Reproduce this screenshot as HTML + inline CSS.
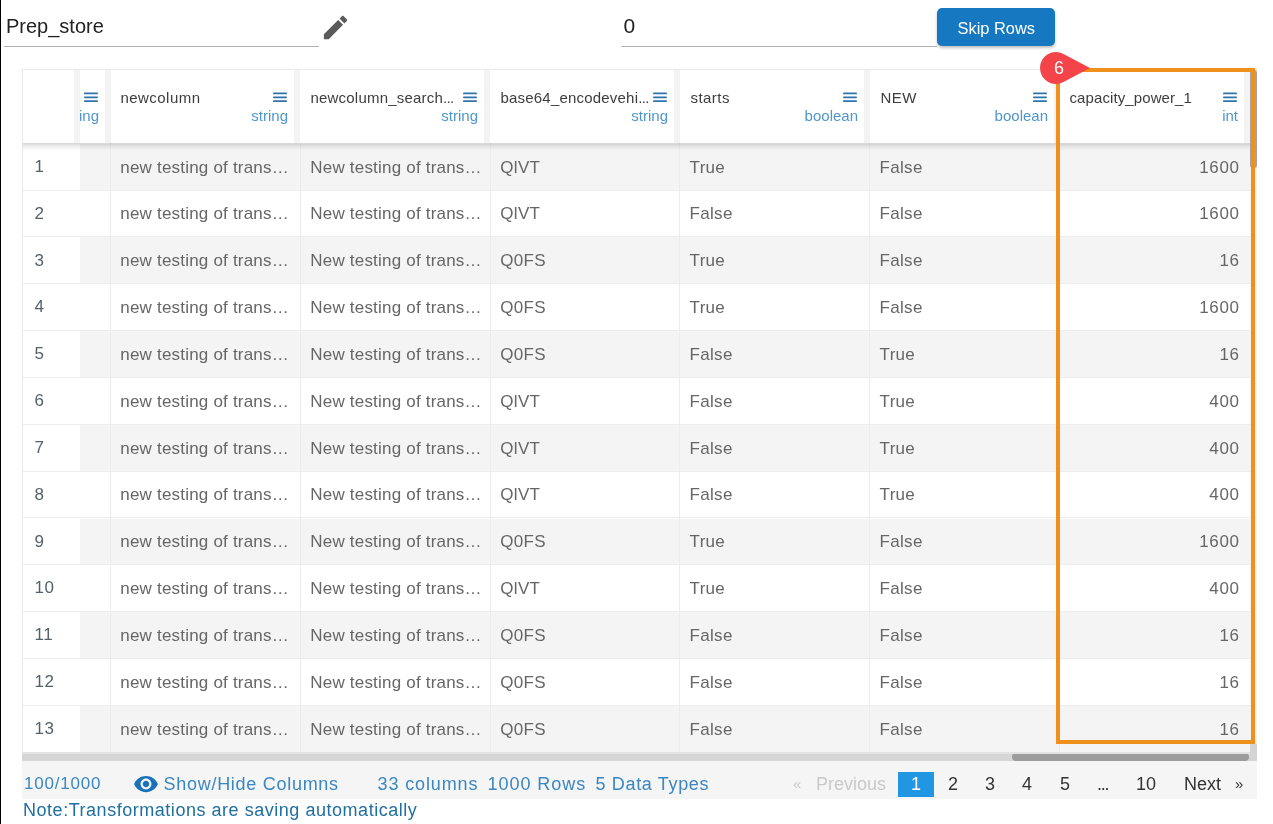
<!DOCTYPE html><html><head><meta charset="utf-8"><style>
*{box-sizing:border-box;margin:0;padding:0}
html,body{width:1273px;height:824px;overflow:hidden;background:#fff;font-family:"Liberation Sans",sans-serif}
.a{position:absolute}
.t{position:absolute;white-space:nowrap;line-height:1}
.hb{position:absolute;width:14px;height:10px}
.hb i{position:absolute;left:0;width:14px;height:2px;background:#2f75b3;border-radius:1px}
</style></head><body><div id="root" style="position:absolute;left:0;top:0;width:1273px;height:824px;will-change:transform"><div class="a" style="left:0;top:0;width:1px;height:824px;background:#000"></div>
<div class="t" style="left:6px;top:15.5px;font-size:20px;color:#222">Prep_store</div>
<div class="a" style="left:4px;top:46px;width:315px;height:1px;background:#b0b0b0"></div>
<svg class="a" style="left:320px;top:12px" width="31" height="31" viewBox="0 0 24 24"><path fill="#5a5a5a" d="M3 17.25V21h3.75L17.81 9.94l-3.75-3.75L3 17.25zM20.71 7.04c.39-.39.39-1.02 0-1.41l-2.34-2.34c-.39-.39-1.02-.39-1.410 0l-1.83 1.83 3.75 3.75 1.83-1.83z"/></svg>
<div class="t" style="left:623.5px;top:14.5px;font-size:21px;color:#222">0</div>
<div class="a" style="left:621px;top:46px;width:316px;height:1px;background:#b0b0b0"></div>
<div class="a" style="left:937px;top:8px;width:118px;height:38px;background:#1778c2;border-radius:5px;box-shadow:0 2px 3px rgba(0,0,0,.25)"></div>
<div class="t" style="left:957.5px;top:19.5px;font-size:16.4px;color:#fff">Skip Rows</div>
<div class="a" style="left:22px;top:69px;width:1235px;height:692px;border:1px solid #e8e8e8;border-bottom:none"></div>
<div class="a" style="left:23px;top:70px;width:1227px;height:73px;background:#fff"></div>
<div class="a" style="left:74px;top:70px;width:6px;height:73px;background:#f3f3f3"></div>
<div class="a" style="left:105px;top:70px;width:6px;height:73px;background:#f3f3f3"></div>
<div class="a" style="left:294px;top:70px;width:6px;height:73px;background:#f3f3f3"></div>
<div class="a" style="left:484px;top:70px;width:6px;height:73px;background:#f3f3f3"></div>
<div class="a" style="left:674px;top:70px;width:6px;height:73px;background:#f3f3f3"></div>
<div class="a" style="left:864px;top:70px;width:6px;height:73px;background:#f3f3f3"></div>
<div class="a" style="left:1054px;top:70px;width:6px;height:73px;background:#f3f3f3"></div>
<div class="a" style="left:1244px;top:70px;width:6px;height:73px;background:#f3f3f3"></div>
<svg class="a" style="left:83.5px;top:91px" width="14" height="12"><g fill="#2f73ad"><rect x="0" y="1.5" width="14" height="1.8" rx=".9"/><rect x="0" y="5.4" width="14" height="1.8" rx=".9"/><rect x="0" y="9.3" width="14" height="1.8" rx=".9"/></g></svg>
<div class="t" style="right:1174px;top:108px;font-size:15px;color:#5096cc">ing</div>
<div class="t" style="left:120.5px;top:90px;font-size:15px;color:#3d3d3d;letter-spacing:0.45px">newcolumn</div>
<svg class="a" style="left:273px;top:91px" width="14" height="12"><g fill="#2f73ad"><rect x="0" y="1.5" width="14" height="1.8" rx=".9"/><rect x="0" y="5.4" width="14" height="1.8" rx=".9"/><rect x="0" y="9.3" width="14" height="1.8" rx=".9"/></g></svg>
<div class="t" style="right:985px;top:108px;font-size:15px;color:#5096cc">string</div>
<div class="t" style="left:310.5px;top:90px;font-size:15px;color:#3d3d3d;letter-spacing:0.2px">newcolumn_search<span style="letter-spacing:-0.6px">...</span></div>
<svg class="a" style="left:463px;top:91px" width="14" height="12"><g fill="#2f73ad"><rect x="0" y="1.5" width="14" height="1.8" rx=".9"/><rect x="0" y="5.4" width="14" height="1.8" rx=".9"/><rect x="0" y="9.3" width="14" height="1.8" rx=".9"/></g></svg>
<div class="t" style="right:795px;top:108px;font-size:15px;color:#5096cc">string</div>
<div class="t" style="left:500.5px;top:90px;font-size:15px;color:#3d3d3d;letter-spacing:0.2px">base64_encodevehi<span style="letter-spacing:-0.6px">...</span></div>
<svg class="a" style="left:653px;top:91px" width="14" height="12"><g fill="#2f73ad"><rect x="0" y="1.5" width="14" height="1.8" rx=".9"/><rect x="0" y="5.4" width="14" height="1.8" rx=".9"/><rect x="0" y="9.3" width="14" height="1.8" rx=".9"/></g></svg>
<div class="t" style="right:605px;top:108px;font-size:15px;color:#5096cc">string</div>
<div class="t" style="left:690.5px;top:90px;font-size:15px;color:#3d3d3d;letter-spacing:0.45px">starts</div>
<svg class="a" style="left:843px;top:91px" width="14" height="12"><g fill="#2f73ad"><rect x="0" y="1.5" width="14" height="1.8" rx=".9"/><rect x="0" y="5.4" width="14" height="1.8" rx=".9"/><rect x="0" y="9.3" width="14" height="1.8" rx=".9"/></g></svg>
<div class="t" style="right:415px;top:108px;font-size:15px;color:#5096cc">boolean</div>
<div class="t" style="left:880.5px;top:90px;font-size:15px;color:#3d3d3d;letter-spacing:0.45px">NEW</div>
<svg class="a" style="left:1033px;top:91px" width="14" height="12"><g fill="#2f73ad"><rect x="0" y="1.5" width="14" height="1.8" rx=".9"/><rect x="0" y="5.4" width="14" height="1.8" rx=".9"/><rect x="0" y="9.3" width="14" height="1.8" rx=".9"/></g></svg>
<div class="t" style="right:225px;top:108px;font-size:15px;color:#5096cc">boolean</div>
<div class="t" style="left:1069.5px;top:90px;font-size:15px;color:#3d3d3d;letter-spacing:0.1px">capacity_power_1</div>
<svg class="a" style="left:1223px;top:91px" width="14" height="12"><g fill="#2f73ad"><rect x="0" y="1.5" width="14" height="1.8" rx=".9"/><rect x="0" y="5.4" width="14" height="1.8" rx=".9"/><rect x="0" y="9.3" width="14" height="1.8" rx=".9"/></g></svg>
<div class="t" style="right:35px;top:108px;font-size:15px;color:#5096cc">int</div>
<div class="a" style="left:23px;top:143.70px;width:57px;height:46.85px;background:#fff;border-bottom:1px solid #ededed"></div>
<div class="a" style="left:80px;top:143.70px;width:1170px;height:46.85px;background:#f4f4f4;border-bottom:1px solid #ededed"></div>
<div class="t" style="left:34.5px;top:157.80px;font-size:17px;color:#56606a;letter-spacing:0.5px">1</div>
<div class="t" style="left:120.3px;top:158.50px;font-size:17px;color:#666;letter-spacing:0.2px">new testing of trans…</div>
<div class="t" style="left:310.3px;top:158.50px;font-size:17px;color:#666;letter-spacing:0.2px">New testing of trans…</div>
<div class="t" style="left:500.3px;top:158.50px;font-size:17px;color:#666;letter-spacing:0.3px">QlVT</div>
<div class="t" style="left:689.5999999999999px;top:158.50px;font-size:17px;color:#666;letter-spacing:0.3px">True</div>
<div class="t" style="left:879.5999999999999px;top:158.50px;font-size:17px;color:#666;letter-spacing:0.3px">False</div>
<div class="t" style="right:33.5px;top:158.50px;font-size:17px;color:#666;letter-spacing:0.6px">1600</div>
<div class="a" style="left:23px;top:190.55px;width:57px;height:46.85px;background:#fff;border-bottom:1px solid #ededed"></div>
<div class="a" style="left:80px;top:190.55px;width:1170px;height:46.85px;background:#fff;border-bottom:1px solid #ededed"></div>
<div class="t" style="left:34.5px;top:204.65px;font-size:17px;color:#56606a;letter-spacing:0.5px">2</div>
<div class="t" style="left:120.3px;top:205.35px;font-size:17px;color:#666;letter-spacing:0.2px">new testing of trans…</div>
<div class="t" style="left:310.3px;top:205.35px;font-size:17px;color:#666;letter-spacing:0.2px">New testing of trans…</div>
<div class="t" style="left:500.3px;top:205.35px;font-size:17px;color:#666;letter-spacing:0.3px">QlVT</div>
<div class="t" style="left:689.5999999999999px;top:205.35px;font-size:17px;color:#666;letter-spacing:0.3px">False</div>
<div class="t" style="left:879.5999999999999px;top:205.35px;font-size:17px;color:#666;letter-spacing:0.3px">False</div>
<div class="t" style="right:33.5px;top:205.35px;font-size:17px;color:#666;letter-spacing:0.6px">1600</div>
<div class="a" style="left:23px;top:237.40px;width:57px;height:46.85px;background:#fff;border-bottom:1px solid #ededed"></div>
<div class="a" style="left:80px;top:237.40px;width:1170px;height:46.85px;background:#f4f4f4;border-bottom:1px solid #ededed"></div>
<div class="t" style="left:34.5px;top:251.50px;font-size:17px;color:#56606a;letter-spacing:0.5px">3</div>
<div class="t" style="left:120.3px;top:252.20px;font-size:17px;color:#666;letter-spacing:0.2px">new testing of trans…</div>
<div class="t" style="left:310.3px;top:252.20px;font-size:17px;color:#666;letter-spacing:0.2px">New testing of trans…</div>
<div class="t" style="left:500.3px;top:252.20px;font-size:17px;color:#666;letter-spacing:0.3px">Q0FS</div>
<div class="t" style="left:689.5999999999999px;top:252.20px;font-size:17px;color:#666;letter-spacing:0.3px">True</div>
<div class="t" style="left:879.5999999999999px;top:252.20px;font-size:17px;color:#666;letter-spacing:0.3px">False</div>
<div class="t" style="right:33.5px;top:252.20px;font-size:17px;color:#666;letter-spacing:0.6px">16</div>
<div class="a" style="left:23px;top:284.25px;width:57px;height:46.85px;background:#fff;border-bottom:1px solid #ededed"></div>
<div class="a" style="left:80px;top:284.25px;width:1170px;height:46.85px;background:#fff;border-bottom:1px solid #ededed"></div>
<div class="t" style="left:34.5px;top:298.35px;font-size:17px;color:#56606a;letter-spacing:0.5px">4</div>
<div class="t" style="left:120.3px;top:299.05px;font-size:17px;color:#666;letter-spacing:0.2px">new testing of trans…</div>
<div class="t" style="left:310.3px;top:299.05px;font-size:17px;color:#666;letter-spacing:0.2px">New testing of trans…</div>
<div class="t" style="left:500.3px;top:299.05px;font-size:17px;color:#666;letter-spacing:0.3px">Q0FS</div>
<div class="t" style="left:689.5999999999999px;top:299.05px;font-size:17px;color:#666;letter-spacing:0.3px">True</div>
<div class="t" style="left:879.5999999999999px;top:299.05px;font-size:17px;color:#666;letter-spacing:0.3px">False</div>
<div class="t" style="right:33.5px;top:299.05px;font-size:17px;color:#666;letter-spacing:0.6px">1600</div>
<div class="a" style="left:23px;top:331.10px;width:57px;height:46.85px;background:#fff;border-bottom:1px solid #ededed"></div>
<div class="a" style="left:80px;top:331.10px;width:1170px;height:46.85px;background:#f4f4f4;border-bottom:1px solid #ededed"></div>
<div class="t" style="left:34.5px;top:345.20px;font-size:17px;color:#56606a;letter-spacing:0.5px">5</div>
<div class="t" style="left:120.3px;top:345.90px;font-size:17px;color:#666;letter-spacing:0.2px">new testing of trans…</div>
<div class="t" style="left:310.3px;top:345.90px;font-size:17px;color:#666;letter-spacing:0.2px">New testing of trans…</div>
<div class="t" style="left:500.3px;top:345.90px;font-size:17px;color:#666;letter-spacing:0.3px">Q0FS</div>
<div class="t" style="left:689.5999999999999px;top:345.90px;font-size:17px;color:#666;letter-spacing:0.3px">False</div>
<div class="t" style="left:879.5999999999999px;top:345.90px;font-size:17px;color:#666;letter-spacing:0.3px">True</div>
<div class="t" style="right:33.5px;top:345.90px;font-size:17px;color:#666;letter-spacing:0.6px">16</div>
<div class="a" style="left:23px;top:377.95px;width:57px;height:46.85px;background:#fff;border-bottom:1px solid #ededed"></div>
<div class="a" style="left:80px;top:377.95px;width:1170px;height:46.85px;background:#fff;border-bottom:1px solid #ededed"></div>
<div class="t" style="left:34.5px;top:392.05px;font-size:17px;color:#56606a;letter-spacing:0.5px">6</div>
<div class="t" style="left:120.3px;top:392.75px;font-size:17px;color:#666;letter-spacing:0.2px">new testing of trans…</div>
<div class="t" style="left:310.3px;top:392.75px;font-size:17px;color:#666;letter-spacing:0.2px">New testing of trans…</div>
<div class="t" style="left:500.3px;top:392.75px;font-size:17px;color:#666;letter-spacing:0.3px">QlVT</div>
<div class="t" style="left:689.5999999999999px;top:392.75px;font-size:17px;color:#666;letter-spacing:0.3px">False</div>
<div class="t" style="left:879.5999999999999px;top:392.75px;font-size:17px;color:#666;letter-spacing:0.3px">True</div>
<div class="t" style="right:33.5px;top:392.75px;font-size:17px;color:#666;letter-spacing:0.6px">400</div>
<div class="a" style="left:23px;top:424.80px;width:57px;height:46.85px;background:#fff;border-bottom:1px solid #ededed"></div>
<div class="a" style="left:80px;top:424.80px;width:1170px;height:46.85px;background:#f4f4f4;border-bottom:1px solid #ededed"></div>
<div class="t" style="left:34.5px;top:438.90px;font-size:17px;color:#56606a;letter-spacing:0.5px">7</div>
<div class="t" style="left:120.3px;top:439.60px;font-size:17px;color:#666;letter-spacing:0.2px">new testing of trans…</div>
<div class="t" style="left:310.3px;top:439.60px;font-size:17px;color:#666;letter-spacing:0.2px">New testing of trans…</div>
<div class="t" style="left:500.3px;top:439.60px;font-size:17px;color:#666;letter-spacing:0.3px">QlVT</div>
<div class="t" style="left:689.5999999999999px;top:439.60px;font-size:17px;color:#666;letter-spacing:0.3px">False</div>
<div class="t" style="left:879.5999999999999px;top:439.60px;font-size:17px;color:#666;letter-spacing:0.3px">True</div>
<div class="t" style="right:33.5px;top:439.60px;font-size:17px;color:#666;letter-spacing:0.6px">400</div>
<div class="a" style="left:23px;top:471.65px;width:57px;height:46.85px;background:#fff;border-bottom:1px solid #ededed"></div>
<div class="a" style="left:80px;top:471.65px;width:1170px;height:46.85px;background:#fff;border-bottom:1px solid #ededed"></div>
<div class="t" style="left:34.5px;top:485.75px;font-size:17px;color:#56606a;letter-spacing:0.5px">8</div>
<div class="t" style="left:120.3px;top:486.45px;font-size:17px;color:#666;letter-spacing:0.2px">new testing of trans…</div>
<div class="t" style="left:310.3px;top:486.45px;font-size:17px;color:#666;letter-spacing:0.2px">New testing of trans…</div>
<div class="t" style="left:500.3px;top:486.45px;font-size:17px;color:#666;letter-spacing:0.3px">QlVT</div>
<div class="t" style="left:689.5999999999999px;top:486.45px;font-size:17px;color:#666;letter-spacing:0.3px">False</div>
<div class="t" style="left:879.5999999999999px;top:486.45px;font-size:17px;color:#666;letter-spacing:0.3px">True</div>
<div class="t" style="right:33.5px;top:486.45px;font-size:17px;color:#666;letter-spacing:0.6px">400</div>
<div class="a" style="left:23px;top:518.50px;width:57px;height:46.85px;background:#fff;border-bottom:1px solid #ededed"></div>
<div class="a" style="left:80px;top:518.50px;width:1170px;height:46.85px;background:#f4f4f4;border-bottom:1px solid #ededed"></div>
<div class="t" style="left:34.5px;top:532.60px;font-size:17px;color:#56606a;letter-spacing:0.5px">9</div>
<div class="t" style="left:120.3px;top:533.30px;font-size:17px;color:#666;letter-spacing:0.2px">new testing of trans…</div>
<div class="t" style="left:310.3px;top:533.30px;font-size:17px;color:#666;letter-spacing:0.2px">New testing of trans…</div>
<div class="t" style="left:500.3px;top:533.30px;font-size:17px;color:#666;letter-spacing:0.3px">Q0FS</div>
<div class="t" style="left:689.5999999999999px;top:533.30px;font-size:17px;color:#666;letter-spacing:0.3px">True</div>
<div class="t" style="left:879.5999999999999px;top:533.30px;font-size:17px;color:#666;letter-spacing:0.3px">False</div>
<div class="t" style="right:33.5px;top:533.30px;font-size:17px;color:#666;letter-spacing:0.6px">1600</div>
<div class="a" style="left:23px;top:565.35px;width:57px;height:46.85px;background:#fff;border-bottom:1px solid #ededed"></div>
<div class="a" style="left:80px;top:565.35px;width:1170px;height:46.85px;background:#fff;border-bottom:1px solid #ededed"></div>
<div class="t" style="left:34.5px;top:579.45px;font-size:17px;color:#56606a;letter-spacing:0.5px">10</div>
<div class="t" style="left:120.3px;top:580.15px;font-size:17px;color:#666;letter-spacing:0.2px">new testing of trans…</div>
<div class="t" style="left:310.3px;top:580.15px;font-size:17px;color:#666;letter-spacing:0.2px">New testing of trans…</div>
<div class="t" style="left:500.3px;top:580.15px;font-size:17px;color:#666;letter-spacing:0.3px">QlVT</div>
<div class="t" style="left:689.5999999999999px;top:580.15px;font-size:17px;color:#666;letter-spacing:0.3px">True</div>
<div class="t" style="left:879.5999999999999px;top:580.15px;font-size:17px;color:#666;letter-spacing:0.3px">False</div>
<div class="t" style="right:33.5px;top:580.15px;font-size:17px;color:#666;letter-spacing:0.6px">400</div>
<div class="a" style="left:23px;top:612.20px;width:57px;height:46.85px;background:#fff;border-bottom:1px solid #ededed"></div>
<div class="a" style="left:80px;top:612.20px;width:1170px;height:46.85px;background:#f4f4f4;border-bottom:1px solid #ededed"></div>
<div class="t" style="left:34.5px;top:626.30px;font-size:17px;color:#56606a;letter-spacing:0.5px">11</div>
<div class="t" style="left:120.3px;top:627.00px;font-size:17px;color:#666;letter-spacing:0.2px">new testing of trans…</div>
<div class="t" style="left:310.3px;top:627.00px;font-size:17px;color:#666;letter-spacing:0.2px">New testing of trans…</div>
<div class="t" style="left:500.3px;top:627.00px;font-size:17px;color:#666;letter-spacing:0.3px">Q0FS</div>
<div class="t" style="left:689.5999999999999px;top:627.00px;font-size:17px;color:#666;letter-spacing:0.3px">False</div>
<div class="t" style="left:879.5999999999999px;top:627.00px;font-size:17px;color:#666;letter-spacing:0.3px">False</div>
<div class="t" style="right:33.5px;top:627.00px;font-size:17px;color:#666;letter-spacing:0.6px">16</div>
<div class="a" style="left:23px;top:659.05px;width:57px;height:46.85px;background:#fff;border-bottom:1px solid #ededed"></div>
<div class="a" style="left:80px;top:659.05px;width:1170px;height:46.85px;background:#fff;border-bottom:1px solid #ededed"></div>
<div class="t" style="left:34.5px;top:673.15px;font-size:17px;color:#56606a;letter-spacing:0.5px">12</div>
<div class="t" style="left:120.3px;top:673.85px;font-size:17px;color:#666;letter-spacing:0.2px">new testing of trans…</div>
<div class="t" style="left:310.3px;top:673.85px;font-size:17px;color:#666;letter-spacing:0.2px">New testing of trans…</div>
<div class="t" style="left:500.3px;top:673.85px;font-size:17px;color:#666;letter-spacing:0.3px">Q0FS</div>
<div class="t" style="left:689.5999999999999px;top:673.85px;font-size:17px;color:#666;letter-spacing:0.3px">False</div>
<div class="t" style="left:879.5999999999999px;top:673.85px;font-size:17px;color:#666;letter-spacing:0.3px">False</div>
<div class="t" style="right:33.5px;top:673.85px;font-size:17px;color:#666;letter-spacing:0.6px">16</div>
<div class="a" style="left:23px;top:705.90px;width:57px;height:46.85px;background:#fff;border-bottom:1px solid #ededed"></div>
<div class="a" style="left:80px;top:705.90px;width:1170px;height:46.85px;background:#f4f4f4;border-bottom:1px solid #ededed"></div>
<div class="t" style="left:34.5px;top:720.00px;font-size:17px;color:#56606a;letter-spacing:0.5px">13</div>
<div class="t" style="left:120.3px;top:720.70px;font-size:17px;color:#666;letter-spacing:0.2px">new testing of trans…</div>
<div class="t" style="left:310.3px;top:720.70px;font-size:17px;color:#666;letter-spacing:0.2px">New testing of trans…</div>
<div class="t" style="left:500.3px;top:720.70px;font-size:17px;color:#666;letter-spacing:0.3px">Q0FS</div>
<div class="t" style="left:689.5999999999999px;top:720.70px;font-size:17px;color:#666;letter-spacing:0.3px">False</div>
<div class="t" style="left:879.5999999999999px;top:720.70px;font-size:17px;color:#666;letter-spacing:0.3px">False</div>
<div class="t" style="right:33.5px;top:720.70px;font-size:17px;color:#666;letter-spacing:0.6px">16</div>
<div class="a" style="left:110px;top:143px;width:1px;height:609px;background:#ececec"></div>
<div class="a" style="left:300px;top:143px;width:1px;height:609px;background:#ececec"></div>
<div class="a" style="left:490px;top:143px;width:1px;height:609px;background:#ececec"></div>
<div class="a" style="left:679px;top:143px;width:1px;height:609px;background:#ececec"></div>
<div class="a" style="left:869px;top:143px;width:1px;height:609px;background:#ececec"></div>
<div class="a" style="left:1059px;top:143px;width:1px;height:609px;background:#ececec"></div>
<div class="a" style="left:23px;top:143px;width:1227px;height:8px;background:linear-gradient(rgba(0,0,0,.17),rgba(0,0,0,.1) 25%,rgba(0,0,0,.04) 60%,rgba(0,0,0,0))"></div>
<div class="a" style="left:1250px;top:70px;width:7px;height:684px;background:#f1f1f1"></div>
<div class="a" style="left:1250px;top:70px;width:7px;height:98px;background:#a6a29e;border-radius:3px"></div>
<div class="a" style="left:22px;top:754px;width:1228px;height:7px;background:#d6d6d6"></div>
<div class="a" style="left:1012px;top:753px;width:237px;height:8px;background:#9c9c9c;border-radius:4px"></div>
<div class="a" style="left:1250px;top:744px;width:7px;height:17px;background:#d4d4d4"></div>
<div class="a" style="left:22px;top:761px;width:1235px;height:37.5px;background:#f5f5f5"></div>
<div class="t" style="left:24px;top:774.5px;font-size:17px;color:#3a87c2;letter-spacing:0.8px">100/1000</div>
<svg class="a" style="left:133px;top:771px" width="26" height="26" viewBox="0 0 24 24"><path fill="#1a73b8" d="M12 4.5C7 4.5 2.73 7.61 1 12c1.73 4.39 6 7.5 11 7.5s9.27-3.11 11-7.5c-1.73-4.39-6-7.5-11-7.5zM12 17c-2.76 0-5-2.24-5-5s2.24-5 5-5 5 2.24 5 5-2.24 5-5 5zm0-8c-1.66 0-3 1.34-3 3s1.34 3 3 3 3-1.34 3-3-1.34-3-3-3z"/></svg>
<div class="t" style="left:163.5px;top:775px;font-size:18px;color:#3a87c2;letter-spacing:0.72px">Show/Hide Columns</div>
<div class="t" style="left:377.5px;top:775px;font-size:18px;color:#3a87c2;letter-spacing:0.87px">33 columns</div>
<div class="t" style="left:487.5px;top:775px;font-size:18px;color:#3a87c2;letter-spacing:0.95px">1000 Rows</div>
<div class="t" style="left:595.5px;top:775px;font-size:18px;color:#3a87c2;letter-spacing:0.66px">5 Data Types</div>
<div class="t" style="left:793px;top:776px;font-size:15px;color:#c9c9c9">«</div>
<div class="t" style="left:816px;top:775px;font-size:18px;color:#c9c9c9">Previous</div>
<div class="a" style="left:898px;top:772px;width:36px;height:25px;background:#2196e3"></div>
<div class="t" style="left:911px;top:775px;font-size:18px;color:#fff">1</div>
<div class="t" style="left:948px;top:775px;font-size:18px;color:#333">2</div>
<div class="t" style="left:985px;top:775px;font-size:18px;color:#333">3</div>
<div class="t" style="left:1022px;top:775px;font-size:18px;color:#333">4</div>
<div class="t" style="left:1060px;top:775px;font-size:18px;color:#333">5</div>
<div class="t" style="left:1136px;top:775px;font-size:18px;color:#333">10</div>
<div class="t" style="left:1184px;top:775px;font-size:18px;color:#333">Next</div>
<div class="t" style="left:1097px;top:775px;font-size:18px;color:#333;letter-spacing:-1.3px">...</div>
<div class="t" style="left:1235px;top:776px;font-size:15px;color:#333">»</div>
<div class="t" style="left:23px;top:801px;font-size:18px;color:#1f6fa0;letter-spacing:0.53px">Note:Transformations are saving automatically</div>
<div class="a" style="left:23px;top:752px;width:1227px;height:2px;background:#e4e4e4"></div>
<div class="a" style="left:1056px;top:68px;width:199px;height:676px;border:4px solid #f0911e"></div>
<svg class="a" style="left:0;top:0" width="1273" height="824"><path fill="#f4444a" d="M1090 68 L1063.53 82.12 A16 16 0 1 1 1063.53 53.88 Z"/></svg>
<div class="t" style="left:1054px;top:59px;font-size:18px;color:#fff">6</div></div></body></html>
